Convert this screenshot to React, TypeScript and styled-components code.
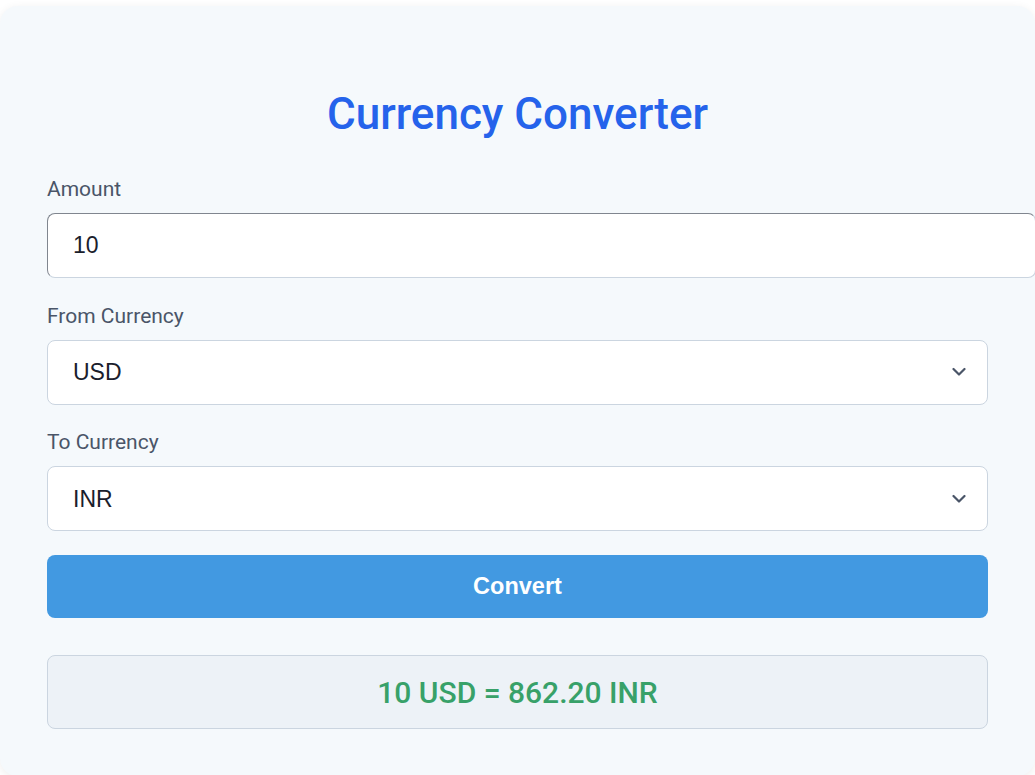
import React, { useState } from "react";
import styled, { createGlobalStyle } from "styled-components";

const GlobalStyle = createGlobalStyle`
  html, body {
    margin: 0;
    padding: 0;
    background: #ffffff;
    overflow: hidden;
  }
  body {
    font-family: Roboto, "Liberation Sans", Arial, sans-serif;
  }
`;

const Page = styled.div`
  padding-top: 6px;
  width: 1035px;
`;

const Card = styled.div`
  box-sizing: border-box;
  width: 1035px;
  background: #f5f9fc;
  border-radius: 18px;
  box-shadow: 0 2px 10px rgba(0, 0, 0, 0.07);
  padding: 82px 47px 47px;
  display: flex;
  flex-direction: column;
`;

const Title = styled.h1`
  margin: 0 0 37px;
  text-align: center;
  font-family: Roboto, sans-serif;
  font-weight: 500;
  font-size: 44px;
  color: #2563eb;
`;

const Field = styled.div`
  display: flex;
  flex-direction: column;
  margin-bottom: 25.5px;
`;

const Label = styled.label`
  font-family: Roboto, sans-serif;
  font-size: 21px;
  color: #4a5568;
  margin-bottom: 12px;
`;

const AmountInput = styled.input`
  box-sizing: content-box;
  width: 100%;
  height: 63px;
  padding: 0 21px 0 25px;
  margin: 0;
  border-width: 1px;
  border-style: solid;
  border-color: #80868f #cbd5e0 #cbd5e0 #80868f;
  border-radius: 8px;
  background: #ffffff;
  font-family: "Liberation Sans", Arial, sans-serif;
  font-size: 23px;
  color: #1a202c;
  outline: none;
`;

const SelectWrap = styled.div`
  position: relative;
`;

const Select = styled.select`
  box-sizing: border-box;
  width: 100%;
  height: 65px;
  padding: 0 24px 0 25px;
  margin: 0;
  appearance: none;
  border: 1px solid #cbd5e0;
  border-radius: 8px;
  background: #ffffff;
  font-family: "Liberation Sans", Arial, sans-serif;
  font-size: 23px;
  color: #1a202c;
  outline: none;
`;

const Chevron = styled.svg`
  position: absolute;
  right: 22px;
  top: 50%;
  transform: translateY(-50%);
  pointer-events: none;
`;

const ConvertButton = styled.button`
  box-sizing: border-box;
  width: 100%;
  height: 63px;
  margin-top: -1.5px;
  border: none;
  border-radius: 8px;
  background: #4299e1;
  color: #ffffff;
  font-family: "Liberation Sans", Arial, sans-serif;
  font-weight: 700;
  font-size: 23.5px;
  cursor: pointer;
`;

const Result = styled.div`
  box-sizing: border-box;
  margin-top: 37px;
  height: 74px;
  display: flex;
  align-items: center;
  justify-content: center;
  background: #edf2f7;
  border: 1px solid #cbd5e0;
  border-radius: 8px;
  font-family: Roboto, sans-serif;
  font-weight: 500;
  font-size: 30px;
  color: #38a169;
`;

const currencies = ["USD", "EUR", "GBP", "INR", "JPY"];

function CurrencySelect({ value, onChange }: { value: string; onChange: (v: string) => void }) {
  return (
    <SelectWrap>
      <Select value={value} onChange={(e) => onChange(e.target.value)}>
        {currencies.map((c) => (
          <option key={c} value={c}>
            {c}
          </option>
        ))}
      </Select>
      <Chevron width="14" height="9" viewBox="0 0 14 9" fill="none">
        <path d="M1.5 1.5 L7 7 L12.5 1.5" stroke="#4a5568" strokeWidth="2.2" strokeLinecap="round" strokeLinejoin="round" />
      </Chevron>
    </SelectWrap>
  );
}

export default function App() {
  const [amount, setAmount] = useState("10");
  const [from, setFrom] = useState("USD");
  const [to, setTo] = useState("INR");

  return (
    <Page>
      <GlobalStyle />
      <Card>
        <Title>Currency Converter</Title>
        <Field>
          <Label>Amount</Label>
          <AmountInput type="number" value={amount} onChange={(e) => setAmount(e.target.value)} />
        </Field>
        <Field>
          <Label>From Currency</Label>
          <CurrencySelect value={from} onChange={setFrom} />
        </Field>
        <Field>
          <Label>To Currency</Label>
          <CurrencySelect value={to} onChange={setTo} />
        </Field>
        <ConvertButton>Convert</ConvertButton>
        <Result>10 USD = 862.20 INR</Result>
      </Card>
    </Page>
  );
}
